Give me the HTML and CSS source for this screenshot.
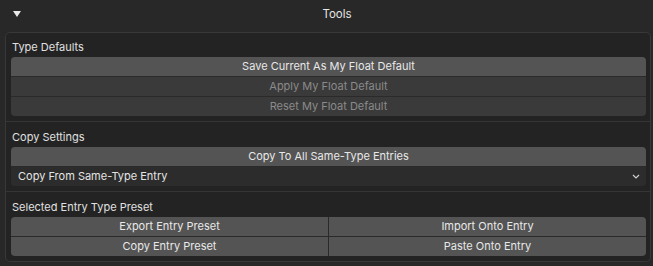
FILE: index.html
```html
<!DOCTYPE html>
<html lang="en">
<head>
    <meta charset="UTF-8">
    <title>Tools</title>
    <link rel="stylesheet" href="styles.css">
</head>
<body>
    <div class="header">
        <span class="arrow"></span>
        <span class="title">Tools</span>
    </div>
    <div class="panel">
        <div class="section">
            <div class="label">Type Defaults</div>
            <div class="group">
                <div class="btn hot">Save Current As My Float Default</div>
                <div class="btn off">Apply My Float Default</div>
                <div class="btn off">Reset My Float Default</div>
            </div>
        </div>
        <div class="section">
            <div class="label">Copy Settings</div>
            <div class="group">
                <div class="btn hot">Copy To All Same-Type Entries</div>
                <div class="btn select">
                    <span>Copy From Same-Type Entry</span>
                    <svg class="chev" width="8" height="5" viewBox="0 0 8 5"><path d="M1 1 L4 4 L7 1" fill="none" stroke="#d0d0d0" stroke-width="1.2"/></svg>
                </div>
            </div>
        </div>
        <div class="section">
            <div class="label">Selected Entry Type Preset</div>
            <div class="group grid">
                <div class="btn hot">Export Entry Preset</div>
                <div class="btn hot">Import Onto Entry</div>
                <div class="btn hot">Copy Entry Preset</div>
                <div class="btn hot">Paste Onto Entry</div>
            </div>
        </div>
    </div>
</body>
</html>
```

FILE: styles.css
```css
body {
    margin: 0;
    background: #282828;
    font-family: Inter, "DejaVu Sans", sans-serif;
    font-size: 11px;
    color: #e0e0e0;
}
.header {
    height: 28px;
    display: flex;
    align-items: center;
    padding-left: 13px;
}
.arrow {
    width: 0;
    height: 0;
    border-left: 4px solid transparent;
    border-right: 4px solid transparent;
    border-top: 6px solid #e8e8e8;
}
.title {
    flex: 1;
    text-align: center;
    font-size: 11.5px;
    color: #e6e6e6;
}
.panel {
    margin: 4px 2px 0 5px;
    border: 1px solid #383838;
    border-radius: 5px;
    background: #232323;
}
.section {
    padding: 4px 4px 5px 5px;
}
.section + .section {
    border-top: 1px solid #353535;
    padding-top: 5px;
}
.label {
    height: 20px;
    line-height: 20px;
    padding-left: 1px;
    color: #e0e0e0;
}
.group {
    display: flex;
    flex-direction: column;
    gap: 1px;
    background: #2a2a2a;
    border-radius: 4px;
    overflow: hidden;
}
.grid {
    display: grid;
    grid-template-columns: 1fr 1fr;
}
.btn {
    height: 19px;
    line-height: 19px;
    text-align: center;
    background: #545454;
    color: #e8e8e8;
}
.btn.off {
    background: #3a3a3a;
    color: #8a8a8a;
}
.btn.select {
    display: flex;
    justify-content: space-between;
    align-items: center;
    text-align: left;
    padding: 0 6px 0 7px;
    background: #2c2c2c;
    color: #e4e4e4;
}
```
